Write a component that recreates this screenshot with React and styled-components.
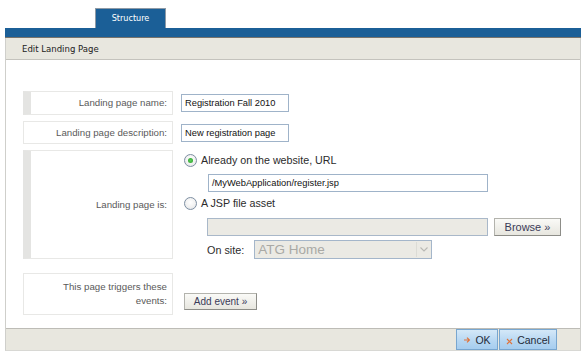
import React from 'react';
import styled, { createGlobalStyle } from 'styled-components';

const GlobalStyle = createGlobalStyle`
  html, body {
    margin: 0;
    padding: 0;
    background: #ffffff;
  }
  body {
    font-family: "Liberation Sans", Arial, sans-serif;
  }
`;

const Page = styled.div`
  width: 587px;
  height: 357px;
  background: #ffffff;
  overflow: hidden;
`;

const TabStrip = styled.div`
  height: 28px;
  display: flex;
  align-items: flex-end;
  padding-left: 95px;
  box-sizing: border-box;
`;

const Tab = styled.div`
  width: 71px;
  height: 20px;
  box-sizing: border-box;
  background: #1b5f97;
  border: 1px solid #8e9aa6;
  border-bottom: none;
  color: #ffffff;
  font-family: "DejaVu Sans Condensed", "DejaVu Sans", sans-serif;
  font-stretch: condensed;
  font-size: 9px;
  display: flex;
  align-items: center;
  justify-content: center;
  padding-bottom: 1px;
`;

const BlueBar = styled.div`
  margin-left: 5px;
  width: 576px;
  height: 10px;
  box-sizing: border-box;
  background: #1b5f97;
  border-bottom: 1px solid #77736c;
`;

const Panel = styled.div`
  margin-left: 5px;
  width: 576px;
  box-sizing: border-box;
  border-left: 1px solid #cfcfcb;
  border-right: 1px solid #cfcfcb;
  border-bottom: 1px solid #d8d8d4;
`;

const Header = styled.div`
  height: 22px;
  box-sizing: border-box;
  background: #e8e7df;
  border-bottom: 1px solid #c4c3bd;
  padding-left: 16px;
  display: flex;
  align-items: center;
  color: #222222;
  font-family: "DejaVu Sans Condensed", "DejaVu Sans", sans-serif;
  font-stretch: condensed;
  font-size: 9.5px;
`;

const Body = styled.div`
  background: #ffffff;
  padding: 31px 0 13px 17px;
  display: flex;
  flex-direction: column;
`;

const Row = styled.div`
  display: grid;
  grid-template-columns: 150px 1fr;
  column-gap: 8px;
  height: ${p => p.$h}px;
  margin-top: ${p => p.$mt || 0}px;
`;

const LabelBox = styled.div`
  box-sizing: border-box;
  border: 1px solid #e8e8e6;
  border-left: ${p => (p.$stripe ? '8px solid #e4e4e2' : '1px solid #e8e8e6')};
  display: flex;
  align-items: center;
  justify-content: flex-end;
  text-align: right;
  padding-right: 5px;
  color: #5a5a5a;
  font-size: 9.7px;
  line-height: 14px;
`;

const Cell = styled.div`
  display: flex;
  flex-direction: column;
  justify-content: ${p => p.$justify || 'flex-start'};
`;

const TextInput = styled.div`
  box-sizing: border-box;
  width: ${p => p.$w}px;
  height: 18px;
  margin-left: ${p => p.$ml || 0}px;
  margin-top: ${p => p.$mt || 0}px;
  border: 1px solid ${p => (p.$disabled ? '#a9b8c9' : '#9fb3c9')};
  background: ${p => (p.$disabled ? '#ebeae4' : '#ffffff')};
  color: #111111;
  font-size: 9.3px;
  padding-left: 3px;
  display: flex;
  align-items: center;
`;

const RadioLine = styled.label`
  display: flex;
  align-items: center;
  height: 16px;
  margin-top: ${p => p.$mt || 0}px;
  margin-left: 3px;
  gap: 4px;
  color: #2b2b2b;
  font-size: 10.7px;
`;

const RadioDot = styled.span`
  width: 13px;
  height: 13px;
  box-sizing: border-box;
  border-radius: 50%;
  border: 1px solid #7d8ea2;
  background: radial-gradient(circle at 50% 40%, #ffffff 0%, #f1f1f1 55%, #d9dde2 100%);
  display: flex;
  align-items: center;
  justify-content: center;
  &::after {
    content: '';
    width: 5px;
    height: 5px;
    border-radius: 50%;
    background: ${p => (p.$checked ? 'radial-gradient(circle, #5ad05a 0%, #2a9a2a 100%)' : 'transparent')};
  }
`;

const InlineRow = styled.div`
  display: flex;
  align-items: center;
  margin-top: ${p => p.$mt || 0}px;
  margin-left: ${p => p.$ml || 0}px;
  margin-bottom: ${p => p.$mb || 0}px;
  gap: ${p => p.$gap || 0}px;
`;

const GrayButton = styled.button`
  box-sizing: border-box;
  width: ${p => p.$w}px;
  height: ${p => p.$h}px;
  padding: 0;
  border: 1px solid #b3b3ad;
  border-right-color: #8d8d88;
  border-bottom-color: #8d8d88;
  background: linear-gradient(#fafaf7, #e7e6df);
  color: #3a3a58;
  font-family: "Liberation Sans", Arial, sans-serif;
  font-size: ${p => p.$fs}px;
  display: flex;
  align-items: center;
  justify-content: center;
`;

const SiteLabel = styled.span`
  color: #2b2b2b;
  font-size: 10.8px;
`;

const Select = styled.div`
  box-sizing: border-box;
  width: 178px;
  height: 19px;
  border: 1px solid #a4b6ca;
  background: #ebeae4;
  color: #a9a9a5;
  font-size: 13.5px;
  display: flex;
  align-items: center;
  padding-left: 3px;
  justify-content: space-between;
`;

const SelectArrow = styled.span`
  width: 14px;
  height: 15px;
  margin-right: 1px;
  box-sizing: border-box;
  border-left: 1px solid #dcdcd6;
  display: flex;
  align-items: center;
  justify-content: center;
`;

const Footer = styled.div`
  height: 22px;
  box-sizing: border-box;
  background: #e8e7df;
  border-top: 1px solid #bdbcb6;
  display: flex;
  justify-content: flex-end;
  padding-right: 23px;
`;

const BlueButton = styled.button`
  box-sizing: border-box;
  width: ${p => p.$w}px;
  height: 21px;
  padding: 0;
  margin-left: ${p => p.$ml || 0}px;
  border: 1px solid #78a6cf;
  background: linear-gradient(#d4e8f8, #b5d6f2 60%, #a6cdef);
  color: #1f2a38;
  font-family: "Liberation Sans", Arial, sans-serif;
  font-size: 10.5px;
  display: flex;
  align-items: center;
  justify-content: center;
  gap: 4px;
`;

const ArrowIcon = () => (
  <svg width="8" height="8" viewBox="0 0 8 8">
    <path d="M1 4h5M4 1.6L6.4 4 4 6.4" stroke="#e0743c" strokeWidth="1.2" fill="none" />
  </svg>
);

const CrossIcon = () => (
  <svg width="7" height="7" viewBox="0 0 7 7" style={{ marginTop: 3 }}>
    <path d="M1 1l5 5M6 1L1 6" stroke="#e0743c" strokeWidth="1.2" fill="none" />
  </svg>
);

const Chevron = () => (
  <svg width="8" height="5" viewBox="0 0 8 5">
    <path d="M0.5 0.5L4 4 7.5 0.5" stroke="#b8b8b4" strokeWidth="1.1" fill="none" />
  </svg>
);

export default function App() {
  return (
    <Page>
      <GlobalStyle />
      <TabStrip>
        <Tab>Structure</Tab>
      </TabStrip>
      <BlueBar />
      <Panel>
        <Header>Edit Landing Page</Header>
        <Body>
          <Row $h={24}>
            <LabelBox $stripe>Landing page name:</LabelBox>
            <Cell $justify="center">
              <TextInput $w={108}>Registration Fall 2010</TextInput>
            </Cell>
          </Row>
          <Row $h={23} $mt={6}>
            <LabelBox>Landing page description:</LabelBox>
            <Cell $justify="center">
              <TextInput $w={108}>New registration page</TextInput>
            </Cell>
          </Row>
          <Row $h={108} $mt={6}>
            <LabelBox $stripe>Landing page is:</LabelBox>
            <Cell>
              <RadioLine $mt={2}>
                <RadioDot $checked />
                Already on the website, URL
              </RadioLine>
              <TextInput $w={280} $ml={27} $mt={6}>/MyWebApplication/register.jsp</TextInput>
              <RadioLine $mt={3}>
                <RadioDot />
                A JSP file asset
              </RadioLine>
              <InlineRow $mt={7} $ml={26} $gap={6}>
                <TextInput $w={281} $disabled />
                <GrayButton $w={67} $h={18} $fs={11}>Browse »</GrayButton>
              </InlineRow>
              <InlineRow $mt={4} $ml={26} $gap={10}>
                <SiteLabel>On site:</SiteLabel>
                <Select>
                  ATG Home
                  <SelectArrow>
                    <Chevron />
                  </SelectArrow>
                </Select>
              </InlineRow>
            </Cell>
          </Row>
          <Row $h={42} $mt={15}>
            <LabelBox>
              This page triggers these
              <br />
              events:
            </LabelBox>
            <Cell $justify="flex-end">
              <InlineRow $ml={3} $mb={5}>
                <GrayButton $w={73} $h={17} $fs={10}>Add event »</GrayButton>
              </InlineRow>
            </Cell>
          </Row>
        </Body>
        <Footer>
          <BlueButton $w={42}>
            <ArrowIcon />
            OK
          </BlueButton>
          <BlueButton $w={58} $ml={1}>
            <CrossIcon />
            Cancel
          </BlueButton>
        </Footer>
      </Panel>
    </Page>
  );
}
